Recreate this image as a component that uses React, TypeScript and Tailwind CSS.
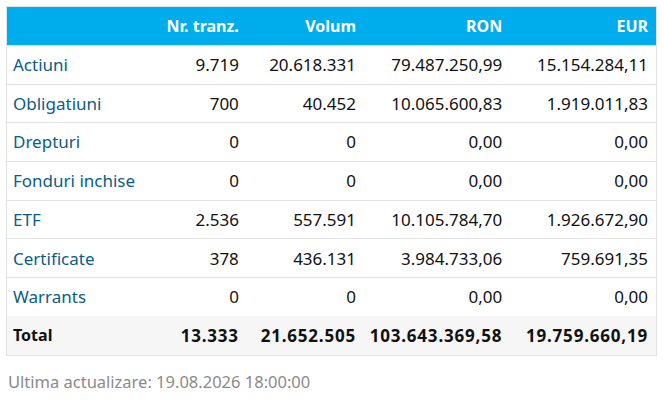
const rows = [
  ["Actiuni", "9.719", "20.618.331", "79.487.250,99", "15.154.284,11"],
  ["Obligatiuni", "700", "40.452", "10.065.600,83", "1.919.011,83"],
  ["Drepturi", "0", "0", "0,00", "0,00"],
  ["Fonduri inchise", "0", "0", "0,00", "0,00"],
  ["ETF", "2.536", "557.591", "10.105.784,70", "1.926.672,90"],
  ["Certificate", "378", "436.131", "3.984.733,06", "759.691,35"],
  ["Warrants", "0", "0", "0,00", "0,00"],
];

const total = ["Total", "13.333", "21.652.505", "103.643.369,58", "19.759.660,19"];

export default function App() {
  return (
    <div className="w-[664px] h-[404px] bg-white p-[6px] font-['Noto_Sans',sans-serif] text-[17px]">
      <table className="w-[651px] border border-[#e2e2e2] border-collapse table-fixed">
        <colgroup>
          <col className="w-[153px]" />
          <col className="w-[87px]" />
          <col className="w-[117px]" />
          <col className="w-[146px]" />
          <col className="w-[146px]" />
        </colgroup>
        <thead>
          <tr className="bg-[#00adec] text-white h-[39px] text-[16px]">
            <th></th>
            <th className="text-right font-bold pr-2">Nr. tranz.</th>
            <th className="text-right font-bold pr-2">Volum</th>
            <th className="text-right font-bold pr-2">RON</th>
            <th className="text-right font-bold pr-2">EUR</th>
          </tr>
        </thead>
        <tbody>
          {rows.map((r) => (
            <tr key={r[0]} className="h-[38.7px] border-t border-[#e2e2e2]">
              <td className="pl-[6px] text-[#0b5c86]">{r[0]}</td>
              {r.slice(1).map((v, i) => (
                <td key={i} className="text-right pr-2 text-[#111]">{v}</td>
              ))}
            </tr>
          ))}
          <tr className="h-[38.7px] bg-[#f6f6f6] font-bold text-[#111]">
            <td className="pl-[6px] text-[16px]">{total[0]}</td>
            {total.slice(1).map((v, i) => (
              <td key={i} className="text-right pr-2 tracking-[0.8px]">{v}</td>
            ))}
          </tr>
        </tbody>
      </table>
      <p className="mt-[14px] ml-[2px] text-[16.5px] text-[#8a8a8a]">Ultima actualizare: 19.08.2026 18:00:00</p>
    </div>
  );
}
